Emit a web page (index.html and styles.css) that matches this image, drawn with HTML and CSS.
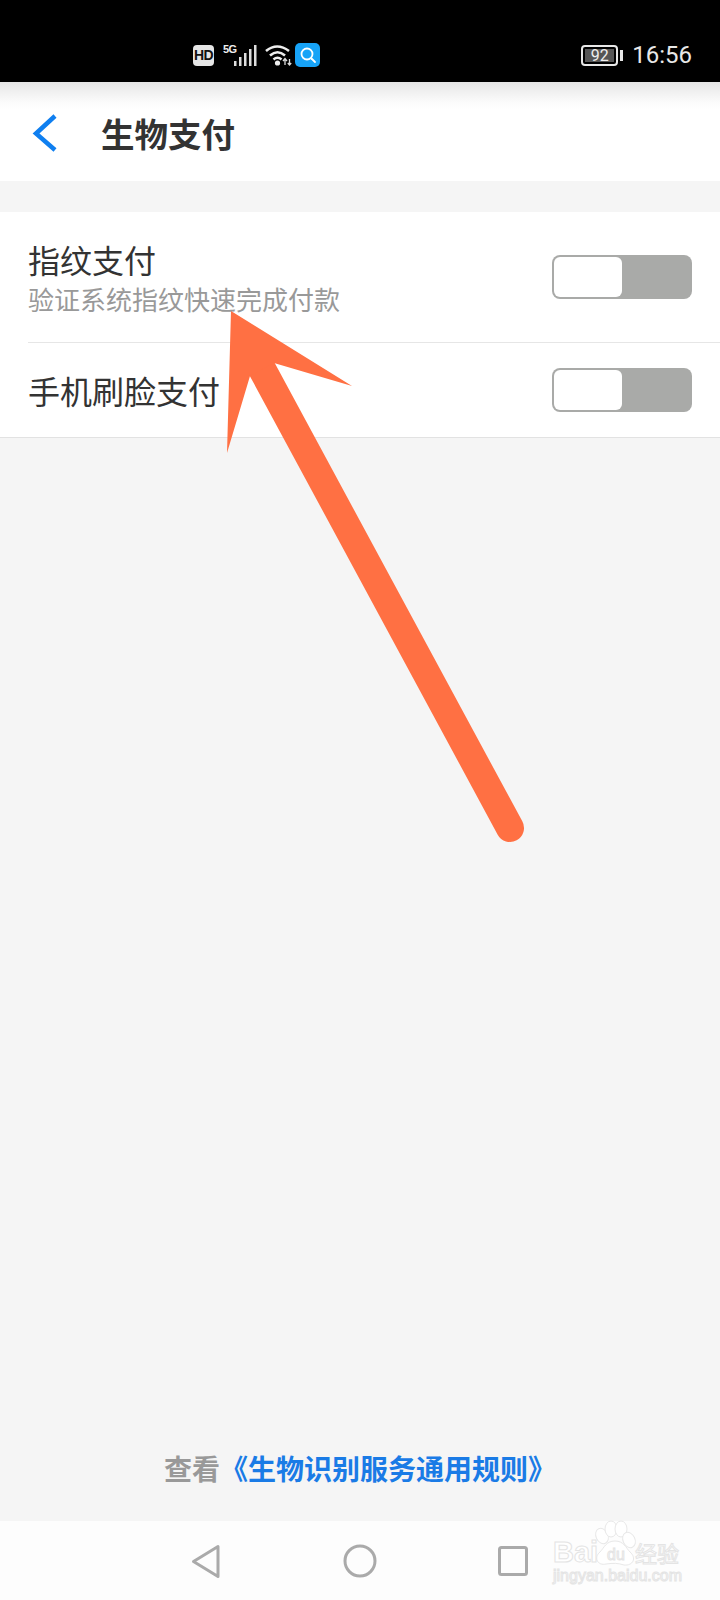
FILE: index.html
```html
<!DOCTYPE html>
<html lang="zh-CN">
<head>
    <meta charset="UTF-8">
    <meta name="viewport" content="width=device-width, initial-scale=1.0">
    <title>生物支付</title>
    <link rel="stylesheet" href="styles.css">
</head>
<body>
    <div class="phone">
        <!-- Status bar -->
        <div class="status-bar">
            <div class="status-icons">
                <span class="hd-badge">HD</span>
                <div class="signal">
                    <span class="signal-label">5G</span>
                    <svg class="signal-bars" width="23" height="21" viewBox="0 0 23 21">
                        <rect x="0" y="16" width="2.500" height="5" fill="#ddd"/>
                        <rect x="5" y="12" width="2.500" height="9" fill="#ddd"/>
                        <rect x="10" y="8" width="2.500" height="13" fill="#ddd"/>
                        <rect x="15" y="4" width="2.500" height="17" fill="#ddd"/>
                        <rect x="20" y="0" width="2.500" height="21" fill="#ddd"/>
                    </svg>
                </div>
                <svg class="wifi" width="27" height="22" viewBox="0 0 27 22">
                    <path d="M1 7 Q12 -2 24 7" fill="none" stroke="#eee" stroke-width="2.6"/>
                    <path d="M5 11.5 Q12.5 5 20 11.5" fill="none" stroke="#eee" stroke-width="2.6"/>
                    <path d="M8.500 15.500 Q12.500 12 16.500 15.500" fill="none" stroke="#eee" stroke-width="2.6"/>
                    <circle cx="12.500" cy="19" r="2.600" fill="#eee"/>
                    <path d="M20 21V15M18 17l2-2.500 2 2.500" fill="none" stroke="#ddd" stroke-width="1.300"/>
                    <path d="M24.500 15v6M22.800 19l1.700 2 1.700-2" fill="none" stroke="#ddd" stroke-width="1.300"/>
                </svg>
                <span class="search-app">
                    <svg width="18" height="18" viewBox="0 0 18 18">
                        <circle cx="8" cy="8" r="5.500" fill="none" stroke="#fff" stroke-width="1.800"/>
                        <path d="M12.500 12.500L16 16" stroke="#fff" stroke-width="1.800" stroke-linecap="round"/>
                    </svg>
                </span>
            </div>
            <div class="status-right">
                <div class="battery">
                    <div class="battery-body"><span class="battery-level">92</span></div>
                    <span class="battery-nub"></span>
                </div>
                <span class="clock">16:56</span>
            </div>
        </div>

        <!-- Header -->
        <div class="header">
            <svg class="back" width="26" height="40" viewBox="0 0 26 40">
                <path d="M23 3L4 20.500 23 37" fill="none" stroke="#0f7ff0" stroke-width="4.500"/>
            </svg>
            <h1 class="title">生物支付</h1>
        </div>

        <!-- Settings list -->
        <div class="list">
            <div class="row row-first">
                <div class="row-text">
                    <div class="row-title">指纹支付</div>
                    <div class="row-sub">验证系统指纹快速完成付款</div>
                </div>
                <div class="toggle"><span class="toggle-knob"></span></div>
            </div>
            <div class="row row-second">
                <div class="row-text">
                    <div class="row-title">手机刷脸支付</div>
                </div>
                <div class="toggle"><span class="toggle-knob"></span></div>
            </div>
        </div>

        <div class="spacer"></div>

        <div class="rules">查看<a class="rules-link" href="#">《生物识别服务通用规则》</a></div>

        <!-- Navigation bar -->
        <div class="nav-bar">
            <svg width="30" height="35" viewBox="0 0 30 35">
                <path d="M27 2.500V32.500L2.500 17.500Z" fill="none" stroke="#aaa" stroke-width="3" stroke-linejoin="round"/>
            </svg>
            <svg width="34" height="34" viewBox="0 0 34 34">
                <circle cx="17" cy="17" r="15" fill="none" stroke="#aaa" stroke-width="3"/>
            </svg>
            <svg width="30" height="30" viewBox="0 0 30 30">
                <rect x="1.500" y="1.500" width="27" height="27" rx="2" fill="none" stroke="#aaa" stroke-width="3"/>
            </svg>
        </div>

        <!-- Annotation arrow -->
        <svg class="arrow" width="720" height="1600" viewBox="0 0 720 1600">
            <path d="M262 369L510 828" stroke="#ff7043" stroke-width="28" stroke-linecap="round" fill="none"/>
            <polygon points="231,311 352,386 274,363 250,376 227,453" fill="#ff7043"/>
        </svg>

        <!-- Watermark -->
        <svg class="watermark" width="136" height="66" viewBox="0 0 136 66">
            <g fill="#fff" stroke="#e8e8e8" stroke-width="1">
                <ellipse cx="51" cy="16" rx="6" ry="8" transform="rotate(-25 51 16)"/>
                <ellipse cx="60" cy="9" rx="6" ry="8"/>
                <ellipse cx="70" cy="9" rx="6" ry="8"/>
                <ellipse cx="78" cy="20" rx="6" ry="8" transform="rotate(-25 78 20)"/>
                <path d="M64 21C55 21 53 28 49 32C42 38 47 46 55 44C62 43 67 43 73 45C82 46 86 38 79 32C75 28 73 21 64 21Z"/>
            </g>
            <text class="wm-brand" x="2" y="42">Bai</text>
            <text class="wm-du" x="56" y="40">du</text>
            <text class="wm-cn" x="84" y="42">经验</text>
            <text class="wm-url" x="2" y="61">jingyan.baidu.com</text>
        </svg>
    </div>
</body>
</html>
```

FILE: styles.css
```css
* {
    margin: 0;
    padding: 0;
    box-sizing: border-box;
}

body {
    background-color: #f5f5f5;
    font-family: "Noto Sans CJK SC", "Noto Sans", sans-serif;
}

.phone {
    position: relative;
    width: 720px;
    height: 1600px;
    display: flex;
    flex-direction: column;
    overflow: hidden;
}

/* Status bar */
.status-bar {
    height: 82px;
    background-color: #000;
    color: #eee;
    display: flex;
    justify-content: space-between;
    align-items: center;
    padding: 28px 28px 0 193px;
}

.status-icons {
    display: flex;
    align-items: center;
}

.hd-badge {
    width: 21px;
    height: 21px;
    background-color: #e6e6e6;
    border-radius: 4px;
    color: #111;
    font-family: "Liberation Sans", sans-serif;
    font-size: 14px;
    font-weight: bold;
    line-height: 21px;
    text-align: center;
    letter-spacing: -0.5px;
}

.signal {
    position: relative;
    width: 34px;
    height: 21px;
    margin-left: 9px;
}

.signal-label {
    position: absolute;
    left: 0;
    top: -1px;
    font-family: "Liberation Sans", sans-serif;
    font-size: 11px;
    font-weight: bold;
    line-height: 11px;
    letter-spacing: -0.5px;
}

.signal-bars {
    position: absolute;
    right: 0;
    top: 0;
}

.wifi {
    margin-left: 8px;
}

.search-app {
    width: 25px;
    height: 24px;
    margin-left: 3px;
    background-color: #17a3f7;
    border-radius: 5px;
    display: flex;
    align-items: center;
    justify-content: center;
}

.status-right {
    display: flex;
    align-items: center;
}

.battery {
    display: flex;
    align-items: center;
}

.battery-body {
    width: 37px;
    height: 21px;
    border: 2px solid #e8e8e8;
    border-radius: 4px;
    padding: 2px;
}

.battery-level {
    display: block;
    height: 13px;
    background-color: #555;
    color: #eee;
    font-family: Roboto, sans-serif;
    font-size: 16px;
    line-height: 13px;
    text-align: center;
}

.battery-nub {
    width: 3px;
    height: 11px;
    margin-left: 2px;
    background-color: #e8e8e8;
}

.clock {
    margin-left: 9px;
    font-family: Roboto, sans-serif;
    font-size: 24px;
    line-height: 30px;
    color: #e8e8e8;
}

/* Header */
.header {
    height: 99px;
    background: linear-gradient(to bottom, #e6e6e6 0, #fbfbfb 20px, #fff 28px);
    display: flex;
    align-items: center;
    padding: 2px 0 0 32px;
}

.back {
    flex-shrink: 0;
}

.title {
    margin-left: 43px;
    color: #333;
    font-size: 33.500px;
    font-weight: bold;
    line-height: 46px;
}

/* Lista */
.list {
    margin-top: 31px;
    background-color: #fff;
    border-bottom: 1px solid #e2e2e2;
}

.row {
    display: flex;
    justify-content: space-between;
    align-items: center;
    margin-left: 28px;
    padding-right: 28px;
}

.row-first {
    height: 131px;
    border-bottom: 1px solid #e6e6e6;
}

.row-second {
    height: 94px;
}

.row-title {
    color: #333;
    font-size: 32px;
    line-height: 44px;
}

.row-sub {
    margin-top: 2px;
    color: #999;
    font-size: 26px;
    line-height: 32px;
}

.row-first .row-text {
    margin-top: -3px;
}

.toggle {
    width: 140px;
    height: 44px;
    background-color: #a9aaa8;
    border-radius: 8px;
    padding: 2px;
}

.toggle-knob {
    display: block;
    width: 68px;
    height: 40px;
    background-color: #fff;
    border-radius: 6px;
}

.spacer {
    flex: 1;
}

/* Rules link */
.rules {
    height: 73px;
    color: #999;
    font-size: 28px;
    font-weight: bold;
    line-height: 40px;
    text-align: center;
}

.rules-link {
    color: #1a7be6;
    text-decoration: none;
}

/* Navigation bar */
.nav-bar {
    height: 79px;
    background-color: #fdfdfd;
    display: flex;
    align-items: center;
    padding: 1px 192px 0 191px;
    justify-content: space-between;
}

/* Overlays */
.arrow {
    position: absolute;
    left: 0;
    top: 0;
    pointer-events: none;
}

.watermark {
    position: absolute;
    left: 551px;
    top: 1520px;
}

.watermark text {
    fill: #fff;
    stroke: #e4e4e4;
    stroke-width: 1;
    font-family: "Liberation Sans", sans-serif;
}

.wm-brand {
    font-size: 29px;
    font-weight: bold;
}

.wm-du {
    font-size: 16px;
}

.wm-cn {
    font-size: 22px;
}

.wm-url {
    font-size: 16px;
}
```
